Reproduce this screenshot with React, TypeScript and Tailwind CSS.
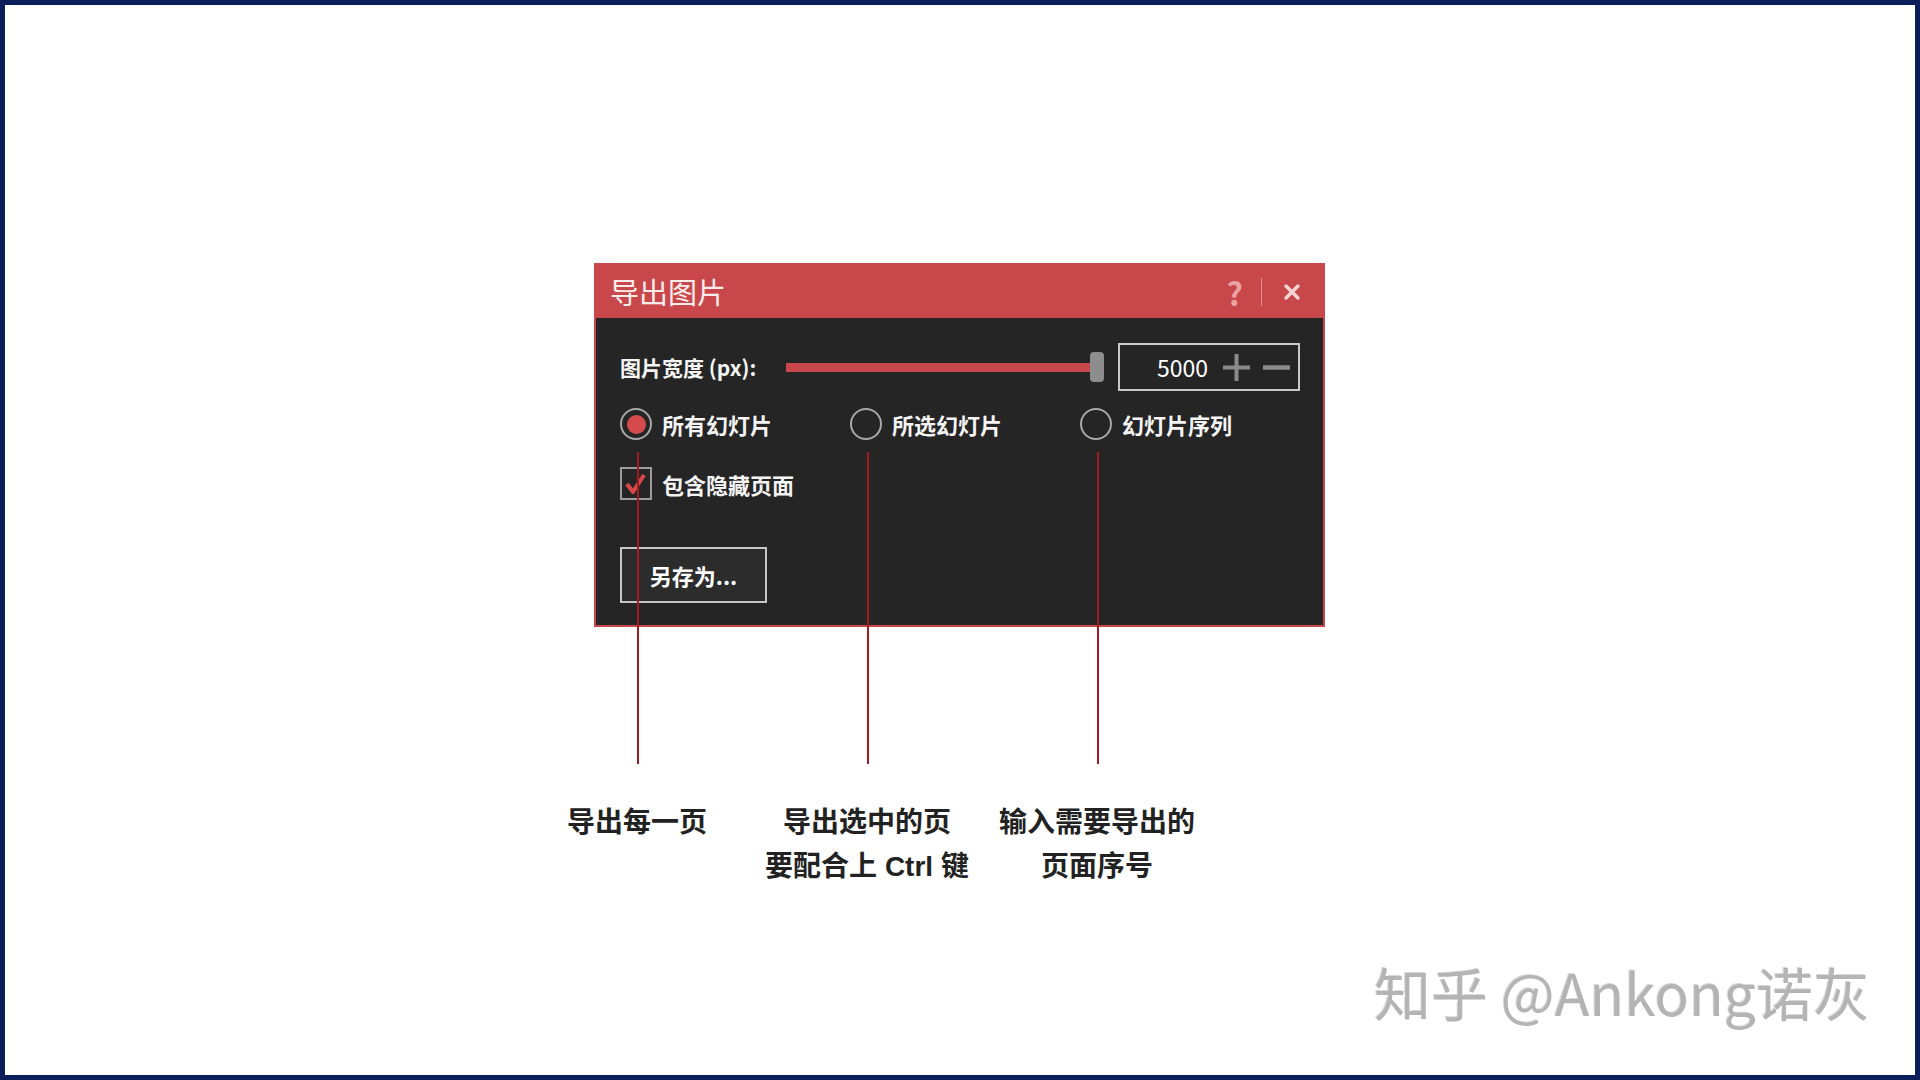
import { X } from "lucide-react";

const lineXs = [115, 345, 575];

function Radio({ checked, label }: { checked?: boolean; label: string }) {
  return (
    <div className="w-[230px] shrink-0 flex items-center gap-[10px]">
      <div className="w-[32px] h-[32px] shrink-0 rounded-full border-2 border-[#a8a8a8] flex items-center justify-center">
        {checked && <div className="w-[19px] h-[19px] rounded-full bg-[#d54a4d]" />}
      </div>
      <span className="text-[22px] leading-none text-[#f4f4f4] font-bold whitespace-nowrap">{label}</span>
    </div>
  );
}

export default function App() {
  return (
    <div className="w-[1920px] h-[1080px] bg-white border-[5px] border-[#0c1e5a] flex flex-col font-['Noto_Sans_CJK_SC',sans-serif]">
      <div className="pl-[517px] pt-[258px]">
        <div className="relative w-[690px]">
          <div className="ml-[72px] w-[731px] border-2 border-[#c8474a] bg-[#252525]">
            <div className="h-[53px] bg-[#c8474a] flex items-center pl-[14px] pr-[19px]">
              <span className="text-[29px] text-[#fbecec] leading-none">导出图片</span>
              <div className="ml-auto flex items-center">
                <span className="text-[32px] font-bold text-[#eaa3a3] leading-none">?</span>
                <div className="w-px h-[28px] bg-[#e08c8c] mx-[18px]" />
                <X className="w-[24px] h-[24px] text-[#f6d4d4]" strokeWidth={3.5} />
              </div>
            </div>
            <div className="pl-[24px] pr-[23px] pt-[25px] pb-[22px]">
              <div className="flex items-center h-[48px]">
                <span className="w-[166px] shrink-0 text-[21px] leading-none text-[#f4f4f4] font-bold whitespace-nowrap">
                  图片宽度 (px):
                </span>
                <div className="w-[304px] shrink-0 h-[9px] bg-[#c8474a]" />
                <div className="w-[14px] shrink-0 h-[30px] rounded-[4px] bg-[#8d8d8d]" />
                <div className="ml-[14px] w-[182px] shrink-0 h-[48px] border-2 border-[#c9c9c9] flex items-center justify-end pr-[8px]">
                  <span className="text-[23px] leading-none text-white">5000</span>
                  <svg className="ml-[15px]" width="27" height="27" viewBox="0 0 27 27">
                    <path d="M13.5 0V27M0 13.5H27" stroke="#8a8a8a" strokeWidth="4" />
                  </svg>
                  <svg className="ml-[13px]" width="27" height="27" viewBox="0 0 27 27">
                    <path d="M0 13.5H27" stroke="#8a8a8a" strokeWidth="4.5" />
                  </svg>
                </div>
              </div>
              <div className="mt-[17px] flex">
                <Radio checked label="所有幻灯片" />
                <Radio label="所选幻灯片" />
                <Radio label="幻灯片序列" />
              </div>
              <div className="mt-[27px] flex items-center">
                <div className="w-[32px] h-[33px] border-2 border-[#9c9c9c] flex items-center justify-center">
                  <svg width="24" height="24" viewBox="0 0 24 24">
                    <path d="M3 12L9 20L20 3" stroke="#d8474b" strokeWidth="4" fill="none" strokeLinejoin="round" />
                  </svg>
                </div>
                <span className="ml-[10px] text-[22px] leading-none text-[#f4f4f4] font-bold">包含隐藏页面</span>
              </div>
              <div className="mt-[47px] w-[147px] h-[56px] border-2 border-[#c6c6c6] bg-[#2c2c2c] flex items-center justify-center">
                <span className="text-[22px] leading-none font-bold text-white">另存为...</span>
              </div>
            </div>
          </div>

          {lineXs.map((x) => (
            <div
              key={x}
              className="absolute top-[189px] h-[312px] w-[2px] bg-[#a31b20]"
              style={{ left: x }}
            />
          ))}

          <div className="mt-[174px] flex text-[28px] leading-[44px] text-[#222222] font-bold font-['Liberation_Sans','Noto_Sans_CJK_SC',sans-serif]">
            <div className="w-[230px] shrink-0 text-center">导出每一页</div>
            <div className="w-[230px] shrink-0 text-center">
              <div>导出选中的页</div>
              <div>要配合上 Ctrl 键</div>
            </div>
            <div className="w-[230px] shrink-0 text-center">
              <div>输入需要导出的</div>
              <div>页面序号</div>
            </div>
          </div>
        </div>
      </div>

      <div className="mt-auto flex justify-end pr-[45px] pb-[54px]">
        <span className="text-[57px] leading-[60px] text-[#b4b4b4] [text-shadow:2px_2px_0_#ffffff,-1px_-1px_0_#d8d8d8]">
          知乎 @Ankong诺灰
        </span>
      </div>
    </div>
  );
}
